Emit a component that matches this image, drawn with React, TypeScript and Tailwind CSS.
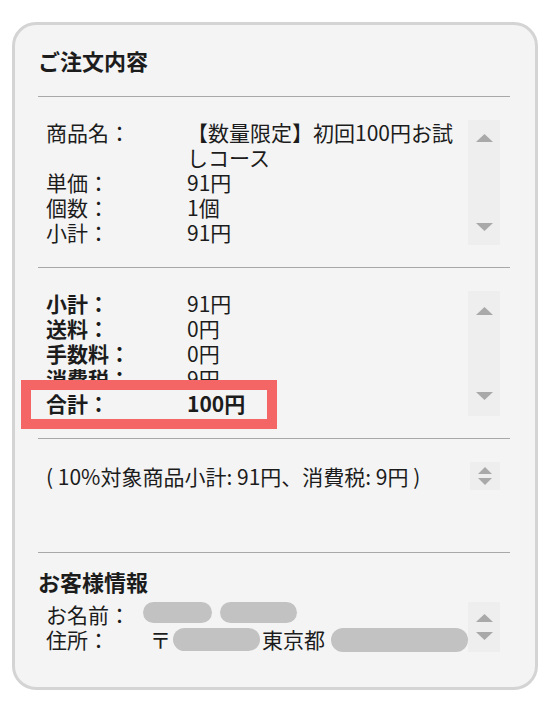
import React from 'react';

const FONT = "font-['Noto_Sans_CJK_JP','Noto_Sans',sans-serif]";

function Arrow({ up, small }: { up?: boolean; small?: boolean }) {
  const w = small ? 14 : 17;
  const h = small ? 7 : 8;
  return (
    <svg width={w} height={h} viewBox={`0 0 ${w} ${h}`} className="block">
      {up ? (
        <polygon points={`0,${h} ${w / 2},0 ${w},${h}`} fill="#a9a9a9" />
      ) : (
        <polygon points={`0,0 ${w},0 ${w / 2},${h}`} fill="#a9a9a9" />
      )}
    </svg>
  );
}

function ScrollBar({ className }: { className: string }) {
  return (
    <div className={`w-[32px] bg-[#eeeeee] flex flex-col items-center justify-between ${className}`}>
      <Arrow up />
      <Arrow />
    </div>
  );
}

function Divider({ className }: { className: string }) {
  return <div className={`h-px bg-[#a8a8a8] ${className}`} />;
}

const Blob = ({ className }: { className: string }) => (
  <span className={`inline-block rounded-full bg-[#c2c2c2] ${className}`} />
);

const ITEM_ROWS = [
  { label: '単価：', value: '91円' },
  { label: '個数：', value: '1個' },
  { label: '小計：', value: '91円' },
];

const TOTAL_ROWS = [
  { label: '小計：', value: '91円' },
  { label: '送料：', value: '0円' },
  { label: '手数料：', value: '0円' },
  { label: '消費税：', value: '9円' },
];

export default function App() {
  return (
    <div className={`min-h-[701px] bg-white pt-[22px] pl-[12px] text-[#1c1c1c] ${FONT}`}>
      <div className="w-[526px] border-[3px] border-[#d4d4d4] rounded-[24px] bg-[#f4f4f4] pl-[23px] pr-[25px] pt-[20px] pb-[35px]">
        <h2 className="text-[22px] leading-[30px] font-bold">ご注文内容</h2>
        <Divider className="mt-[21px]" />

        {/* 商品 */}
        <div className="mt-[23px] flex h-[125px] text-[21px] leading-[25px]">
          <div className="flex-1 pl-[8px] overflow-hidden">
            <div className="flex">
              <span className="w-[141px] shrink-0">商品名：</span>
              <span className="w-[276px]">【数量限定】初回100円お試しコース</span>
            </div>
            {ITEM_ROWS.map(r => (
              <div key={r.label} className="flex">
                <span className="w-[141px] shrink-0">{r.label}</span>
                <span>{r.value}</span>
              </div>
            ))}
          </div>
          <ScrollBar className="mr-[10px] py-[14px]" />
        </div>

        <Divider className="mt-[22px]" />

        {/* 合計 */}
        <div className="mt-[23px] flex h-[125px] text-[21px] leading-[25px]">
          <div className="relative flex-1 pl-[8px]">
            {TOTAL_ROWS.map(r => (
              <div key={r.label} className="flex">
                <span className="w-[141px] shrink-0 font-bold">{r.label}</span>
                <span>{r.value}</span>
              </div>
            ))}
            <div className="absolute left-[-17px] top-[89px] w-[256px] h-[49px] border-[10px] border-[#f46666] bg-[#f4f4f4]" />
            <div className="relative flex font-bold">
              <span className="w-[141px] shrink-0">合計：</span>
              <span>100円</span>
            </div>
          </div>
          <ScrollBar className="mr-[10px] py-[16px]" />
        </div>

        <Divider className="mt-[22px]" />

        {/* 税内訳 */}
        <div className="mt-[23px] flex h-[28px] text-[21px] leading-[28px]">
          <div className="flex-1 pl-[8px] whitespace-nowrap">( 10%対象商品小計: 91円、消費税: 9円 )</div>
          <div className="w-[30px] mr-[10px] bg-[#eeeeee] flex flex-col items-center justify-center gap-[4px]">
            <Arrow up small />
            <Arrow small />
          </div>
        </div>

        <Divider className="mt-[62px]" />

        <h2 className="mt-[14px] text-[22px] leading-[28px] font-bold">お客様情報</h2>
        <div className="mt-[7px] flex h-[50px] text-[21px] leading-[25px]">
          <div className="flex-1 pl-[8px] overflow-hidden">
            <div className="flex items-start">
              <span className="w-[104px] shrink-0">お名前：</span>
              <Blob className="ml-[-7px] w-[69px] h-[21px]" />
              <Blob className="ml-[8px] w-[77px] h-[21px]" />
            </div>
            <div className="flex items-center">
              <span className="w-[104px] shrink-0">住所：</span>
              <span>〒</span>
              <Blob className="ml-[2px] w-[87px] h-[23px]" />
              <span className="ml-[2px]">東京都</span>
              <Blob className="ml-[6px] w-[137px] h-[24px]" />
            </div>
          </div>
          <ScrollBar className="mr-[10px] py-[12px]" />
        </div>
      </div>
    </div>
  );
}
